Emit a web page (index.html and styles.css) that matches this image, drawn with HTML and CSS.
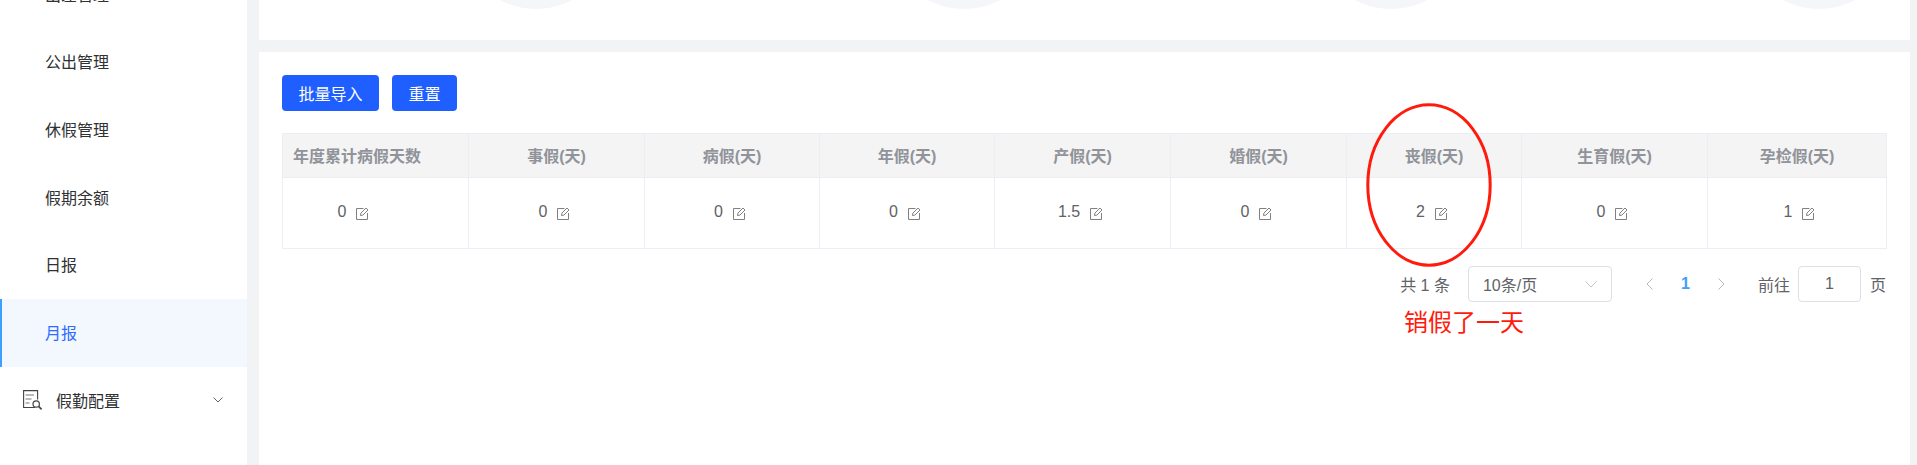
FILE: index.html
```html
<!DOCTYPE html>
<html lang="en">
  <head>
    <meta charset="UTF-8" />
    <title>月报</title>
    <link rel="stylesheet" href="styles.css">
  </head>
  <body>
    <svg class="defs" width="0" height="0">
      <symbol id="edit" viewBox="0 0 13 13">
        <path d="M7.5 1.5H.5v11h11V6" fill="none" stroke="currentColor" stroke-width="1" />
        <path d="M4.5 8.5l.4-2.4L10 1l2 2-5.1 5.1z" fill="none" stroke="currentColor" stroke-width="1" />
      </symbol>
    </svg>
    <div class="layout">
      <aside class="sidebar">
        <ul class="menu">
          <li class="menu-item">出差管理</li>
          <li class="menu-item">公出管理</li>
          <li class="menu-item">休假管理</li>
          <li class="menu-item">假期余额</li>
          <li class="menu-item">日报</li>
          <li class="menu-item active">月报</li>
          <li class="menu-group">
            <svg class="group-icon" viewBox="0 0 20 20">
              <path d="M12 17.5H.6V.6h14v9" fill="none" stroke="#444" stroke-width="1.1" />
              <path d="M2.5 5h8.5M2.5 9h6M2.5 13h4" stroke="#777" stroke-width="1.1" />
              <circle cx="13.2" cy="14" r="3.2" fill="#fff" stroke="#444" stroke-width="1.2" />
              <path d="M15.6 16.4l3 3" stroke="#444" stroke-width="1.6" />
            </svg>
            <span class="group-label">假勤配置</span>
            <svg class="group-arrow" viewBox="0 0 10 6">
              <path d="M.5.5L5 5 9.5.5" fill="none" stroke="#606266" stroke-width="1" />
            </svg>
          </li>
        </ul>
      </aside>

      <main class="main">
        <section class="stats">
          <div class="stat-circle"></div>
          <div class="stat-circle"></div>
          <div class="stat-circle"></div>
          <div class="stat-circle"></div>
        </section>

        <section class="card">
          <div class="toolbar">
            <button class="btn">批量导入</button>
            <button class="btn">重置</button>
          </div>

          <table class="report">
            <thead>
              <tr>
                <th>年度累计病假天数</th>
                <th>事假(天)</th>
                <th>病假(天)</th>
                <th>年假(天)</th>
                <th>产假(天)</th>
                <th>婚假(天)</th>
                <th>丧假(天)</th>
                <th>生育假(天)</th>
                <th>孕检假(天)</th>
              </tr>
            </thead>
            <tbody>
              <tr>
                <td>0<svg class="edit-icon"><use href="#edit" /></svg></td>
                <td>0<svg class="edit-icon"><use href="#edit" /></svg></td>
                <td>0<svg class="edit-icon"><use href="#edit" /></svg></td>
                <td>0<svg class="edit-icon"><use href="#edit" /></svg></td>
                <td>1.5<svg class="edit-icon"><use href="#edit" /></svg></td>
                <td>0<svg class="edit-icon"><use href="#edit" /></svg></td>
                <td>2<svg class="edit-icon"><use href="#edit" /></svg></td>
                <td>0<svg class="edit-icon"><use href="#edit" /></svg></td>
                <td>1<svg class="edit-icon"><use href="#edit" /></svg></td>
              </tr>
            </tbody>
          </table>

          <div class="pager">
            <span class="pager-total">共 1 条</span>
            <div class="pager-size">
              <span>10条/页</span>
              <svg class="pager-caret" viewBox="0 0 12 7">
                <path d="M.5.5L6 6 11.5.5" fill="none" stroke="#c0c4cc" stroke-width="1" />
              </svg>
            </div>
            <svg class="pager-arrow prev" viewBox="0 0 7 12">
              <path d="M6.5.5L1 6l5.5 5.5" fill="none" stroke="#b4b8c0" stroke-width="1" />
            </svg>
            <span class="pager-current">1</span>
            <svg class="pager-arrow next" viewBox="0 0 7 12">
              <path d="M.5.5L6 6 .5 11.5" fill="none" stroke="#b4b8c0" stroke-width="1" />
            </svg>
            <span class="pager-goto">前往</span>
            <div class="pager-input">1</div>
            <span class="pager-unit">页</span>
          </div>

          <!-- annotation drawn on top of the screenshot -->
          <svg class="mark-circle" viewBox="0 0 126 164">
            <ellipse cx="63" cy="82" rx="61.2" ry="80.2" fill="none" stroke="#ff1a0c" stroke-width="3" />
          </svg>
          <div class="mark-text">销假了一天</div>
        </section>
      </main>
    </div>
  </body>
</html>
```

FILE: styles.css
```css
* {
  box-sizing: border-box;
  font-family: "Liberation Sans", "Noto Sans CJK SC", sans-serif;
}
html,
body {
  margin: 0;
  padding: 0;
  height: 100%;
  overflow: hidden;
  background: #f2f3f5;
}
.defs {
  position: absolute;
}
.layout {
  display: flex;
  height: 465px;
  gap: 12px;
}

/* sidebar */
.sidebar {
  width: 247px;
  flex: none;
  background: #ffffff;
  overflow: hidden;
}
.menu {
  list-style: none;
  margin: -39px 0 0;
  padding: 0;
}
.menu-item {
  height: 67.6px;
  padding: 0 0 2px 45px;
  display: flex;
  align-items: center;
  font-size: 16px;
  color: #303133;
}
.menu-item.active {
  padding-left: 43px;
  border-left: 2px solid #409eff;
  background: #f3f8ff;
  color: #2f6bff;
}
.menu-group {
  height: 67.6px;
  padding: 0 24px 0 23px;
  display: flex;
  align-items: center;
  font-size: 16px;
  color: #303133;
}
.group-icon {
  width: 20px;
  height: 20px;
  margin-right: 13px;
}
.group-label {
  flex: 1;
}
.group-arrow {
  width: 10px;
  height: 6px;
}

/* main */
.main {
  flex: 1;
  padding-right: 8px;
  display: flex;
  flex-direction: column;
  gap: 12px;
}
.stats {
  height: 40px;
  flex: none;
  background: #ffffff;
  overflow: hidden;
  padding: 0 0 31px 199px;
  display: flex;
  align-items: flex-end;
  gap: 271.5px;
}
.stat-circle {
  width: 156px;
  height: 156px;
  flex: none;
  border-radius: 50%;
  background: #f5f6fa;
}
.card {
  flex: 1;
  position: relative;
  background: #ffffff;
  padding: 23px;
}
.toolbar {
  display: flex;
  gap: 13px;
  margin-bottom: 22px;
}
.btn {
  height: 36px;
  padding: 0 16.5px;
  border: none;
  border-radius: 4px;
  background: #1f5eff;
  color: #ffffff;
  font-size: 16px;
}

/* table */
.report {
  width: 1604px;
  table-layout: fixed;
  border-collapse: collapse;
  font-size: 16px;
}
.report th,
.report td {
  border: 1px solid #ebeef5;
  text-align: center;
}
.report th {
  height: 44px;
  padding: 0 0 2px;
  width: 175px;
  background: #f4f4f5;
  color: #909399;
  font-weight: bold;
}
.report td {
  height: 71px;
  padding: 0 4px 2px 0;
  color: #606266;
}
.report th:nth-child(1),
.report th:nth-child(8) {
  width: 186px;
}
.report th:nth-child(2),
.report th:nth-child(5),
.report th:nth-child(6) {
  width: 176px;
}
.report th:nth-child(9) {
  width: 179px;
}
.report th:nth-child(1) {
  padding-left: 10px;
  text-align: left;
}
.report td:nth-child(1) {
  padding-right: 44px;
}
.report td:nth-child(9) {
  padding: 0 0 2px 5px;
}
.edit-icon {
  width: 13px;
  height: 13px;
  margin-left: 10px;
  color: #808080;
  vertical-align: -3px;
}

/* pagination */
.pager {
  margin-top: 17px;
  padding-right: 1px;
  display: flex;
  align-items: center;
  justify-content: flex-end;
  height: 36px;
  font-size: 16px;
  color: #606266;
}
.pager-total {
  margin-right: 18px;
}
.pager-size {
  width: 144px;
  height: 36px;
  padding: 0 14px;
  display: flex;
  align-items: center;
  justify-content: space-between;
  border: 1px solid #dcdfe6;
  border-radius: 4px;
}
.pager-caret {
  width: 12px;
  height: 7px;
}
.pager-arrow {
  width: 7px;
  height: 12px;
}
.pager-arrow.prev {
  margin-left: 34px;
}
.pager-current {
  width: 65px;
  text-align: center;
  font-weight: bold;
  color: #409eff;
}
.pager-goto {
  margin-left: 33px;
  margin-right: 8px;
}
.pager-input {
  width: 63px;
  height: 36px;
  line-height: 34px;
  text-align: center;
  border: 1px solid #dcdfe6;
  border-radius: 4px;
}
.pager-unit {
  margin-left: 9px;
}

/* red annotation */
.mark-circle {
  position: absolute;
  left: 1107px;
  top: 51px;
  width: 126px;
  height: 164px;
}
.mark-text {
  position: absolute;
  left: 1145px;
  top: 254px;
  font-size: 24px;
  line-height: 34px;
  color: #ff1a0c;
}
```
